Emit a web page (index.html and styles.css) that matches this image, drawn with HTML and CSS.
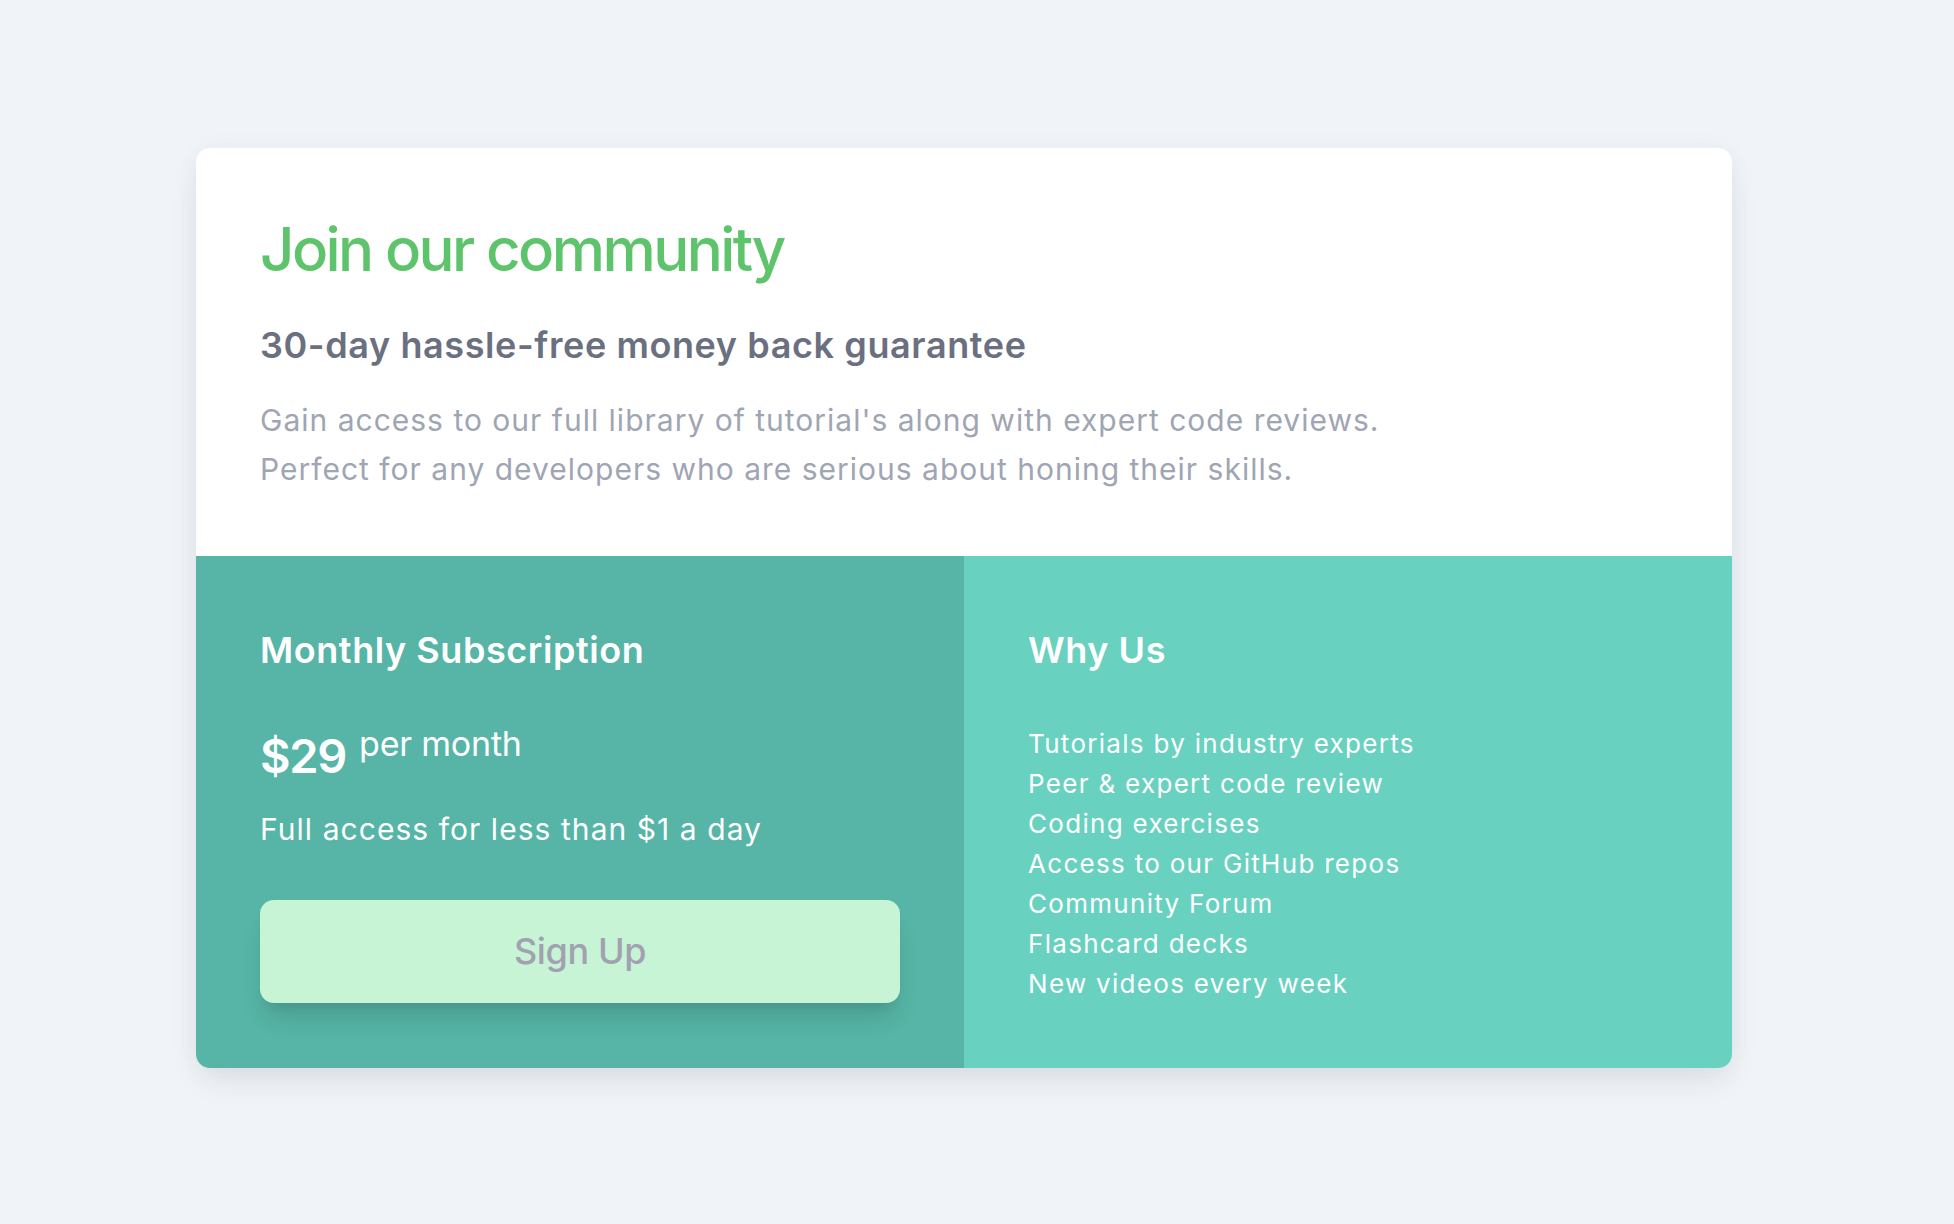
FILE: index.html
```html
<!DOCTYPE html>
<html lang="en">
<head>
<meta charset="utf-8">
<title>Join our community</title>
<link rel="stylesheet" href="styles.css">
</head>
<body>
<main class="page">
  <section class="card">
    <div class="intro">
      <h1 class="title">Join our community</h1>
      <h2 class="subtitle">30-day hassle-free money back guarantee</h2>
      <p class="lead">Gain access to our full library of tutorial's along with expert code reviews.<br>Perfect for any developers who are serious about honing their skills.</p>
    </div>
    <div class="bottom">
      <div class="col col-sub">
        <h3 class="col-title">Monthly Subscription</h3>
        <div class="price"><span class="amount">$29</span><span class="per">per month</span></div>
        <p class="price-note">Full access for less than $1 a day</p>
        <button class="signup" type="button">Sign Up</button>
      </div>
      <div class="col col-why">
        <h3 class="col-title">Why Us</h3>
        <ul class="reasons">
          <li>Tutorials by industry experts</li>
          <li>Peer &amp; expert code review</li>
          <li>Coding exercises</li>
          <li>Access to our GitHub repos</li>
          <li>Community Forum</li>
          <li>Flashcard decks</li>
          <li>New videos every week</li>
        </ul>
      </div>
    </div>
  </section>
</main>
</body>
</html>
```
FILE: styles.css
```css
* { box-sizing: border-box; }
html, body { margin: 0; padding: 0; }
body {
  background: #f0f4f8;
  font-family: Inter, "Noto Sans", "Liberation Sans", sans-serif;
  min-height: 1224px;
}
.page {
  padding: 148px 0 0 196px;
}
.card {
  width: 1536px;
  background: #ffffff;
  border-radius: 14px;
  overflow: hidden;
  box-shadow: 0 16px 32px -6px rgba(30, 40, 60, 0.10), 0 0 24px rgba(30, 40, 60, 0.04);
}
.intro {
  padding: 71px 64px 62px 64px;
}
.title {
  margin: 0;
  font-size: 60px;
  line-height: 60px;
  font-weight: 500;
  color: #5ec46b;
  letter-spacing: -2.6px;
}
.subtitle {
  margin: 46px 0 0 0;
  font-size: 36px;
  line-height: 40px;
  font-weight: 600;
  color: #6b7080;
  letter-spacing: 0.6px;
}
.lead {
  margin: 31px 0 0 0;
  font-size: 30px;
  line-height: 48.75px;
  font-weight: 400;
  color: #a0a5b3;
  letter-spacing: 1px;
}
.bottom {
  display: grid;
  grid-template-columns: 1fr 1fr;
}
.col {
  padding: 74px 64px 64px 64px;
  color: #ffffff;
}
.col-sub { background: #56b5a6; }
.col-why { background: #69d1bf; }
.col-title {
  margin: 0;
  font-size: 36px;
  line-height: 40px;
  font-weight: 600;
  letter-spacing: 0.55px;
}
.price {
  display: flex;
  align-items: flex-start;
  margin-top: 57px;
}
.amount {
  display: block;
  font-size: 47px;
  line-height: 58px;
  font-weight: 600;
  letter-spacing: -1.3px;
}
.per {
  display: block;
  font-size: 34px;
  line-height: 34px;
  font-weight: 400;
  margin-left: 13px;
  letter-spacing: -0.2px;
}
.price-note {
  margin: 26px 0 0 0;
  font-size: 30px;
  line-height: 36px;
  font-weight: 400;
  letter-spacing: 1.05px;
}
.signup {
  display: block;
  width: 100%;
  height: 103px;
  margin-top: 53px;
  border: 0;
  border-radius: 14px;
  background: #c6f4d4;
  color: #a1a1b2;
  font-family: inherit;
  font-size: 36px;
  font-weight: 500;
  letter-spacing: -0.4px;
  box-shadow: 0 20px 25px -5px rgba(0, 0, 0, 0.12), 0 10px 10px -5px rgba(0, 0, 0, 0.05);
  cursor: pointer;
}
.reasons {
  list-style: none;
  margin: 54px 0 0 0;
  padding: 0;
}
.reasons li {
  font-size: 26px;
  line-height: 40px;
  font-weight: 400;
  letter-spacing: 1.3px;
}
```
